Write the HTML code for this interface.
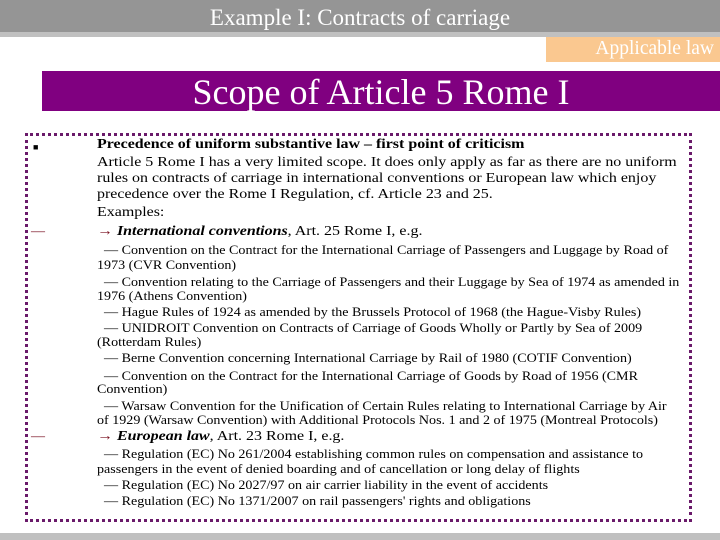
<!DOCTYPE html>
<html><head><meta charset="utf-8"><style>
body{margin:0;width:720px;height:540px;position:relative;overflow:hidden;background:#fff;font-family:"Liberation Serif",serif;}
.a{position:absolute;white-space:nowrap;line-height:16px;color:#000;transform-origin:0 50%}
.m{font-size:14px;left:97px;transform:scaleX(1.14)}
.s{font-size:12.4px;left:97px;transform:scaleX(1.135)}
.r{color:#7a1020}
</style></head><body>
<div style="position:absolute;left:0;top:0;width:720px;height:32px;background:#959595"></div>
<div style="position:absolute;left:0;top:32px;width:720px;height:5px;background:#c0c0c0"></div>
<div class="a" style="left:0;width:720px;text-align:center;top:4px;font-size:23px;line-height:28px;color:#fff">Example I: Contracts of carriage</div>
<div style="position:absolute;left:546px;top:37px;width:174px;height:25px;background:#fac890"></div>
<div class="a" style="right:6px;top:37px;font-size:19.5px;line-height:24px;color:#fff">Applicable law</div>
<div style="position:absolute;left:42px;top:71px;width:678px;height:40px;background:#800080"></div>
<div class="a" style="left:42px;width:678px;text-align:center;top:72px;font-size:36px;line-height:40px;color:#fff">Scope of Article 5 Rome I</div>
<div style="position:absolute;left:25px;top:133px;width:661px;height:383px;border:3px dotted #6a1a6a"></div>
<div class="a" style="left:33px;top:139px;font-size:9px">&#9632;</div>
<div class="a r" style="left:31px;top:224px;font-size:14px">—</div>
<div class="a r" style="left:31px;top:429px;font-size:14px">—</div>
<div class="a m" style="top:137px;font-weight:bold;transform:scaleX(1.14)">Precedence of uniform substantive law – first point of criticism</div>
<div class="a m" style="top:155px">Article 5 Rome I has a very limited scope. It does only apply as far as there are no uniform</div>
<div class="a m" style="top:171px">rules on contracts of carriage in international conventions or European law which enjoy</div>
<div class="a m" style="top:187px">precedence over the Rome I Regulation, cf. Article 23 and 25.</div>
<div class="a m" style="top:205px">Examples:</div>
<div class="a m" style="top:224px"><span class="r">→</span> <b><i>International conventions</i></b>, Art. 25 Rome I, e.g.</div>
<div class="a s" style="top:242px">&nbsp;&nbsp;— Convention on the Contract for the International Carriage of Passengers and Luggage by Road of</div>
<div class="a s" style="top:257px">1973 (CVR Convention)</div>
<div class="a s" style="top:274px">&nbsp;&nbsp;— Convention relating to the Carriage of Passengers and their Luggage by Sea of 1974 as amended in</div>
<div class="a s" style="top:288px">1976 (Athens Convention)</div>
<div class="a s" style="top:304px">&nbsp;&nbsp;— Hague Rules of 1924 as amended by the Brussels Protocol of 1968 (the Hague-Visby Rules)</div>
<div class="a s" style="top:320px">&nbsp;&nbsp;— UNIDROIT Convention on Contracts of Carriage of Goods Wholly or Partly by Sea of 2009</div>
<div class="a s" style="top:334px">(Rotterdam Rules)</div>
<div class="a s" style="top:350px">&nbsp;&nbsp;— Berne Convention concerning International Carriage by Rail of 1980 (COTIF Convention)</div>
<div class="a s" style="top:368px">&nbsp;&nbsp;— Convention on the Contract for the International Carriage of Goods by Road of 1956 (CMR</div>
<div class="a s" style="top:381px">Convention)</div>
<div class="a s" style="top:398px">&nbsp;&nbsp;— Warsaw Convention for the Unification of Certain Rules relating to International Carriage by Air</div>
<div class="a s" style="top:412px">of 1929 (Warsaw Convention) with Additional Protocols Nos. 1 and 2 of 1975 (Montreal Protocols)</div>
<div class="a m" style="top:429px"><span class="r">→</span> <b><i>European law</i></b>, Art. 23 Rome I, e.g.</div>
<div class="a s" style="top:446px">&nbsp;&nbsp;— Regulation (EC) No 261/2004 establishing common rules on compensation and assistance to</div>
<div class="a s" style="top:461px">passengers in the event of denied boarding and of cancellation or long delay of flights</div>
<div class="a s" style="top:477px">&nbsp;&nbsp;— Regulation (EC) No 2027/97 on air carrier liability in the event of accidents</div>
<div class="a s" style="top:493px">&nbsp;&nbsp;— Regulation (EC) No 1371/2007 on rail passengers' rights and obligations</div>
<div style="position:absolute;left:0;top:533px;width:720px;height:7px;background:#c0c0c0"></div>
</body></html>
